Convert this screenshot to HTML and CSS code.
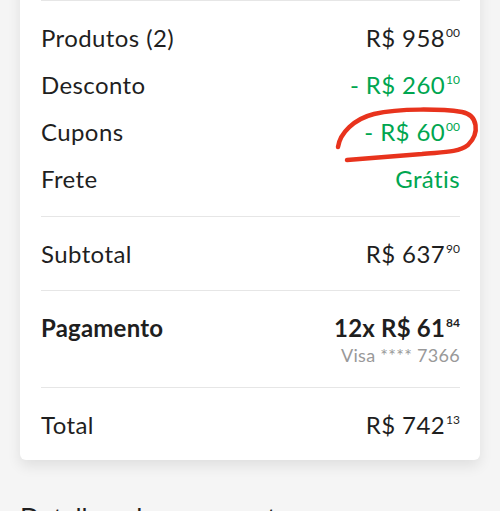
FILE: index.html
```html
<!DOCTYPE html>
<html lang="pt-BR">
<head>
   <meta charset="UTF-8">
   <meta name="viewport" content="width=device-width, initial-scale=1.0">
   <title>Resumo da compra</title>
   <link rel="stylesheet" href="styles.css">
</head>
<body>
   <div class="card">
      <div class="group">
         <div class="row">
            <span class="label">Produtos (2)</span>
            <span class="price">R$ 958<sup>00</sup></span>
         </div>
         <div class="row">
            <span class="label">Desconto</span>
            <span class="price green">- R$ 260<sup>10</sup></span>
         </div>
         <div class="row">
            <span class="label">Cupons</span>
            <span class="price green marked">- R$ 60<sup>00</sup>
               <svg class="scribble" width="150" height="60" viewBox="0 0 150 60">
                  <path d="M8 44 C10 30 24 16 44 11 C70 5 112 6 132 9 C148 12 150 30 138 42 C128 50 110 49 92 51 C66 53 40 55 17 57" fill="none" stroke="#e8331d" stroke-width="4.5" stroke-linecap="round"/>
               </svg>
            </span>
         </div>
         <div class="row">
            <span class="label">Frete</span>
            <span class="price green">Grátis</span>
         </div>
      </div>
      <div class="group single">
         <div class="row">
            <span class="label">Subtotal</span>
            <span class="price">R$ 637<sup>90</sup></span>
         </div>
      </div>
      <div class="group payment">
         <div class="row top">
            <span class="label bold">Pagamento</span>
            <div class="pay">
               <span class="price bold">12x R$ 61<sup>84</sup></span>
               <span class="card-info">Visa **** 7366</span>
            </div>
         </div>
      </div>
      <div class="group single last">
         <div class="row">
            <span class="label">Total</span>
            <span class="price">R$ 742<sup>13</sup></span>
         </div>
      </div>
   </div>
   <h2 class="details">Detalhes do pagamento</h2>
</body>
</html>
```

FILE: styles.css
```css
* {
   margin: 0;
   padding: 0;
   box-sizing: border-box;
}
body {
   background-color: #f5f5f5;
   font-family: Lato, "Open Sans", sans-serif;
   color: #1f1f1f;
   overflow: hidden;
}
.card {
   background-color: #fff;
   margin: -30px 20px 0 20px;
   padding: 30px 20px 0 21px;
   border-radius: 0 0 6px 6px;
   box-shadow: 0 6px 14px rgba(0, 0, 0, 0.09);
}
.group {
   border-top: 1px solid #e6e6e6;
   padding: 13px 0 14px;
}
.group.single {
   padding: 13px 0;
}
.group.payment {
   padding: 13px 0 21px;
}
.group.last {
   padding: 13px 0 12px;
}
.row {
   display: flex;
   justify-content: space-between;
   align-items: center;
   height: 47px;
   font-size: 24px;
   letter-spacing: 0.4px;
}
.row.top {
   align-items: flex-start;
   height: auto;
   padding-top: 9px;
}
.label.bold, .price.bold {
   font-weight: 700;
   letter-spacing: 0.2px;
}
.price {
   white-space: nowrap;
}
.price sup {
   font-size: 12px;
   vertical-align: 10px;
   margin-left: 1px;
   letter-spacing: 0;
}
.green {
   color: #00a650;
}
.marked {
   position: relative;
}
.scribble {
   position: absolute;
   right: -20px;
   top: -14px;
}
.pay {
   display: flex;
   flex-direction: column;
   align-items: flex-end;
}
.card-info {
   font-size: 18px;
   color: #999;
   margin-top: 2px;
   letter-spacing: 0.3px;
}
.details {
   font-size: 26px;
   font-weight: 400;
   margin: 42px 0 0 20px;
}
```
